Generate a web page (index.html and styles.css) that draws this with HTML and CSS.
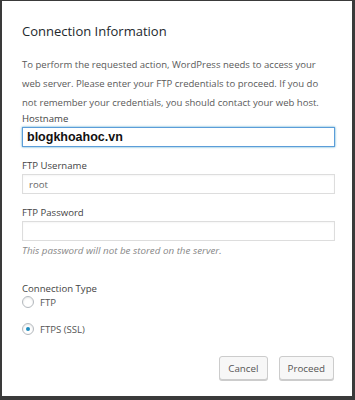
FILE: index.html
```html
<!DOCTYPE html>
<html lang="en">
  <head>
    <meta charset="UTF-8" />
    <title>Connection Information</title>
    <link rel="stylesheet" href="styles.css">
  </head>
  <body>
    <div class="modal">
      <h2 class="modal-title">Connection Information</h2>
      <p class="intro">
        To perform the requested action, WordPress needs to access your
        web server. Please enter your FTP credentials to proceed. If you do
        not remember your credentials, you should contact your web host.
      </p>

      <div class="field">
        <label class="field-label">Hostname</label>
        <input class="text-input host-input focused" type="text" value="blogkhoahoc.vn" />
      </div>

      <div class="field">
        <label class="field-label">FTP Username</label>
        <input class="text-input" type="text" value="root" />
      </div>

      <div class="field">
        <label class="field-label">FTP Password</label>
        <input class="text-input" type="password" value="" />
        <p class="note">This password will not be stored on the server.</p>
      </div>

      <fieldset class="conn-type">
        <legend class="field-label">Connection Type</legend>
        <label class="radio-row"><span class="radio"></span>FTP</label>
        <label class="radio-row"><span class="radio checked"></span>FTPS (SSL)</label>
      </fieldset>

      <div class="actions">
        <button class="btn">Cancel</button>
        <button class="btn">Proceed</button>
      </div>
    </div>
  </body>
</html>
```

FILE: styles.css
```css
/* page background behind the dialog */
body {
  margin: 0;
  background: #3a3a3a;
  font-family: "Open Sans", "Noto Sans", sans-serif;
}

/* dialog box */
.modal {
  background: #fff;
  margin: 1px 3px 0 2px;
  height: 395px;
  box-sizing: border-box;
  padding: 20px 18px 0 20px;
  color: #555;
}

.modal-title {
  margin: 0;
  font-size: 13px;
  font-weight: normal;
  color: #23282d;
  line-height: 20px;
}

.intro {
  margin: 14px 0 0 0;
  font-size: 9.55px;
  line-height: 19px;
  color: #5a5a5a;
}

/* form fields */
.field {
  margin-top: 1px;
}

.field + .field {
  margin-top: 13px;
}

.field-label {
  display: block;
  font-size: 9.6px;
  line-height: 12px;
  color: #444;
}

.text-input {
  display: block;
  box-sizing: border-box;
  width: 313px;
  height: 20px;
  margin: 2px 0 0 0;
  padding: 0 6px;
  border: 1px solid #ddd;
  font-family: "Open Sans", sans-serif;
  font-size: 9.6px;
  color: #666;
  background: #fff;
  box-shadow: inset 0 1px 2px rgba(0, 0, 0, 0.04);
}

.host-input {
  padding-left: 4px;
  font-family: "Liberation Sans", Arial, sans-serif;
  font-weight: bold;
  font-size: 12.5px;
  color: #111;
}

.focused {
  border-color: #5b9dd9;
  box-shadow: 0 0 2px rgba(30, 140, 190, 0.8);
}

.note {
  margin: 3px 0 0 0;
  font-size: 9.8px;
  line-height: 13px;
  font-style: italic;
  color: #888;
}

/* connection type radios */
.conn-type {
  border: 0;
  margin: 26px 0 0 0;
  padding: 0;
}

.conn-type legend {
  padding: 0;
}

.radio-row {
  display: flex;
  align-items: center;
  font-size: 9.6px;
  color: #555;
  height: 14px;
}

.radio-row + .radio-row {
  margin-top: 13px;
}

.radio {
  width: 10px;
  height: 10px;
  border: 1px solid #b4b9be;
  border-radius: 50%;
  margin-right: 6px;
  display: flex;
  align-items: center;
  justify-content: center;
  box-shadow: inset 0 1px 2px rgba(0, 0, 0, 0.1);
}

.radio.checked::after {
  content: "";
  width: 4px;
  height: 4px;
  border-radius: 50%;
  background: #1e8cbe;
}

/* buttons */
.actions {
  display: flex;
  justify-content: flex-end;
  gap: 11px;
  margin-top: 20px;
}

.btn {
  height: 24px;
  padding: 0 8px;
  border: 1px solid #ccc;
  border-radius: 3px;
  background: #f7f7f7;
  color: #555;
  font-family: "Open Sans", sans-serif;
  font-size: 9.8px;
  box-shadow: 0 1px 0 #ccc;
}
```
